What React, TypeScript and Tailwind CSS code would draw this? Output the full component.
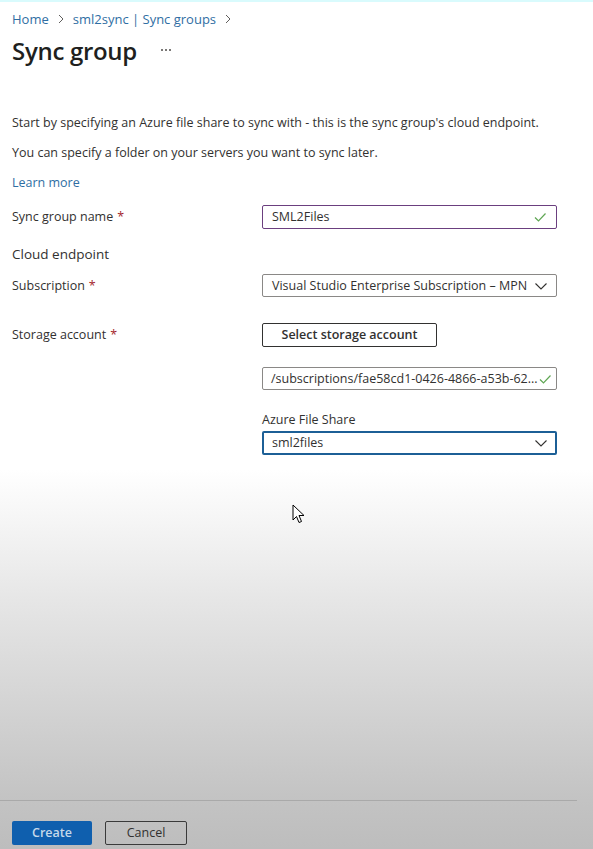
import React from "react";

const font = { fontFamily: '"Segoe UI", "Open Sans", "Noto Sans", sans-serif' };

function Check({ color }: { color: string }) {
  return (
    <svg width="14" height="14" viewBox="0 0 14 14" className="shrink-0">
      <path d="M2 7.5 L5.5 11 L12.5 3.5" fill="none" stroke={color} strokeWidth="1.2" />
    </svg>
  );
}

function Chevron() {
  return (
    <svg width="14" height="14" viewBox="0 0 14 14" className="shrink-0">
      <path d="M1.5 4.5 L7 10 L12.5 4.5" fill="none" stroke="#323130" strokeWidth="1.1" />
    </svg>
  );
}

function Sep() {
  return (
    <svg width="8" height="10" viewBox="0 0 8 10" className="shrink-0">
      <path d="M2 1 L6 5 L2 9" fill="none" stroke="#605e5c" strokeWidth="1" />
    </svg>
  );
}

function Req() {
  return <span className="text-[#a4262c] ml-1">*</span>;
}

export default function App() {
  return (
    <div
      className="w-[593px] h-[849px] overflow-hidden relative flex flex-col text-[#323130] bg-[linear-gradient(to_bottom,#ffffff_0px,#ffffff_470px,#e6e6e6_600px,#c3c3c3_800px,#bdbdbd_849px)]"
      style={font}
    >
      <div className="h-[2px] bg-[#d9fbfd]" />
      <div className="flex items-center gap-[8px] px-[12px] mt-[9px] text-[13px] text-[#2f6ea3] leading-[16px]">
        <span>Home</span>
        <Sep />
        <span>sml2sync | Sync groups</span>
        <Sep />
      </div>
      <div className="flex items-center px-[12px] mt-[9px]">
        <span className="text-[24px] font-semibold leading-[30px] text-[#201f1e] tracking-[-0.3px]">Sync group</span>
        <span className="ml-[24px] flex gap-[2px] -mt-[2px]">
          <span className="w-[2px] h-[2px] bg-[#7a7876]" />
          <span className="w-[2px] h-[2px] bg-[#7a7876]" />
          <span className="w-[2px] h-[2px] bg-[#7a7876]" />
        </span>
      </div>

      <div className="px-[12px] mt-[49px] text-[12.5px] leading-[16px] flex flex-col gap-[14px]">
        <p>Start by specifying an Azure file share to sync with - this is the sync group's cloud endpoint.</p>
        <p>You can specify a folder on your servers you want to sync later.</p>
        <p className="text-[#2f6ea3]">Learn more</p>
      </div>

      <div className="px-[12px] mt-[14px] text-[12.5px] leading-[16px]">
        <div className="flex items-center h-[24px]">
          <div className="w-[250px]">Sync group name<Req /></div>
          <div className="w-[295px] h-[24px] border border-[#6b3f7f] rounded-[2px] flex items-center px-[9px] justify-between">
            <span>SML2Files</span>
            <Check color="#5fa653" />
          </div>
        </div>
        <div className="mt-[15px] text-[13.5px] h-[20px] flex items-center">Cloud endpoint</div>
        <div className="flex items-center h-[23px] mt-[10px]">
          <div className="w-[250px]">Subscription<Req /></div>
          <div className="w-[295px] h-[23px] border border-[#8a8886] rounded-[2px] flex items-center pl-[9px] pr-[8px] justify-between">
            <span>Visual Studio Enterprise Subscription – MPN</span>
            <Chevron />
          </div>
        </div>
        <div className="flex items-start mt-[26px]">
          <div className="w-[250px] h-[23px] flex items-center">Storage account<Req /></div>
          <div className="flex flex-col">
            <div className="w-[175px] h-[24px] border border-[#323130] rounded-[2px] flex items-center justify-center font-semibold text-[12.5px]">
              Select storage account
            </div>
            <div className="mt-[20px] w-[295px] h-[23px] border border-[#8a8886] rounded-[2px] flex items-center pl-[8px] pr-[4px] justify-between">
              <span className="whitespace-nowrap">/subscriptions/fae58cd1-0426-4866-a53b-62...</span>
              <Check color="#5fa653" />
            </div>
            <div className="mt-[22px] h-[16px]">Azure File Share</div>
            <div className="mt-[3px] w-[295px] h-[24px] border-2 border-[#1c5f96] rounded-[2px] flex items-center pl-[8px] pr-[7px] justify-between">
              <span>sml2files</span>
              <Chevron />
            </div>
          </div>
        </div>
      </div>

      <svg className="absolute left-[292px] top-[504px]" width="16" height="22" viewBox="0 0 16 22">
        <path d="M1 1 L1 16 L4.5 12.5 L7 18.5 L9.5 17.5 L7 11.5 L12 11.5 Z" fill="#ffffff" stroke="#000000" strokeWidth="1" />
      </svg>

      <div className="flex-1" />
      <div className="w-[577px] h-px bg-[#a9a9a9]" />
      <div className="flex items-start gap-[13px] px-[12px] h-[48px] pt-[20px]">
        <div className="w-[80px] h-[24px] rounded-[2px] bg-[#0f5fae] text-[#c5d9ea] font-semibold text-[12.5px] flex items-center justify-center">
          Create
        </div>
        <div className="w-[82px] h-[24px] rounded-[2px] border border-[#3a3a3a] text-[#323130] text-[12.5px] flex items-center justify-center">
          Cancel
        </div>
      </div>
    </div>
  );
}
